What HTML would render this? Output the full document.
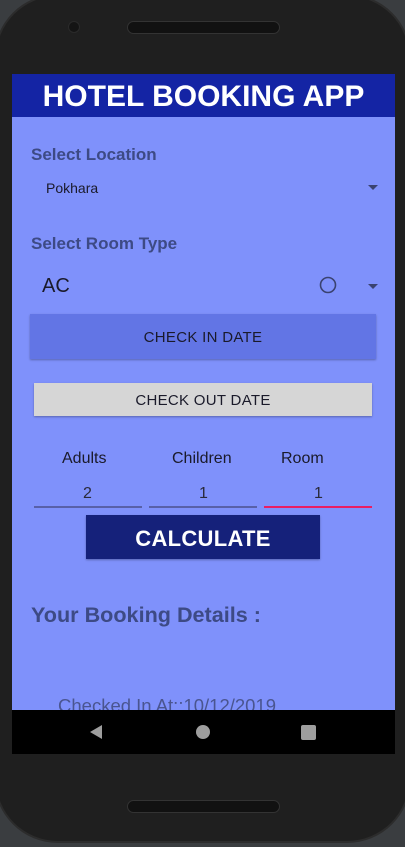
<!DOCTYPE html>
<html><head><meta charset="utf-8"><style>
*{margin:0;padding:0;box-sizing:border-box}
html,body{width:405px;height:847px;overflow:hidden;background:#3a3d40;font-family:"Liberation Sans",Roboto,sans-serif}
.phone{position:absolute;left:-4px;top:-4px;width:413px;height:845px;background:#1f1f1f;border-radius:62px;box-shadow:0 0 0 2px #2c2c2c}
.abs{position:absolute}
.screen{position:absolute;left:12px;top:74px;width:383px;height:680px;background:#7f91fb;overflow:hidden}
.hdr{position:absolute;left:0;top:0;width:383px;height:43px;background:#1424a4;color:#fff;font-weight:bold;font-size:30px;text-align:center;line-height:46px}
.lbl{position:absolute;color:#3d4a85;font-weight:bold}
.t{position:absolute;white-space:nowrap}
.btn{position:absolute;text-align:center;color:#1a1a2a;font-size:15px;letter-spacing:.3px;box-shadow:0 1px 2px rgba(0,0,0,.3)}
.ul{position:absolute;height:2px;top:432px;background:#5860a8}
.nav{position:absolute;left:0;top:636px;width:383px;height:44px;background:#000}
</style></head><body>
<div class="phone"></div>
<div class="abs" style="left:127px;top:21px;width:153px;height:13px;border-radius:7px;background:#111;border:1px solid #333"></div>
<div class="abs" style="left:68px;top:21px;width:12px;height:12px;border-radius:6px;background:#141414;border:1px solid #2a2a2a"></div>
<div class="abs" style="left:127px;top:800px;width:153px;height:13px;border-radius:7px;background:#111;border:1px solid #333"></div>
<div class="screen">
 <div class="hdr">HOTEL BOOKING APP</div>
 <div class="lbl" style="left:19px;top:71px;font-size:17px">Select Location</div>
 <div class="t" style="left:34px;top:106px;font-size:14px;color:#1a1a2a">Pokhara</div>
 <svg class="abs" style="left:356px;top:111px" width="10" height="5"><path d="M0 0H10L5 5Z" fill="#3a4270"/></svg>
 <div class="lbl" style="left:19px;top:160px;font-size:17px">Select Room Type</div>
 <div class="t" style="left:30px;top:201px;font-size:20px;color:#1a1a2a">AC</div>
 <svg class="abs" style="left:307px;top:202px" width="18" height="18"><circle cx="9" cy="9" r="7.5" fill="none" stroke="#3a4270" stroke-width="1.6"/></svg>
 <svg class="abs" style="left:356px;top:210px" width="10" height="5"><path d="M0 0H10L5 5Z" fill="#3a4270"/></svg>
 <div class="btn" style="left:18px;top:240px;width:346px;height:45px;background:#6275e5;line-height:48px">CHECK IN DATE</div>
 <div class="btn" style="left:22px;top:309px;width:338px;height:33px;background:#d6d6d6;line-height:36px">CHECK OUT DATE</div>
 <div class="t" style="left:50px;top:376px;font-size:16px;color:#1a1a2a">Adults</div>
 <div class="t" style="left:160px;top:376px;font-size:16px;color:#1a1a2a">Children</div>
 <div class="t" style="left:269px;top:376px;font-size:16px;color:#1a1a2a">Room</div>
 <div class="t" style="left:71px;top:411px;font-size:16px;color:#2a2a3a">2</div>
 <div class="t" style="left:187px;top:411px;font-size:16px;color:#2a2a3a">1</div>
 <div class="t" style="left:302px;top:411px;font-size:16px;color:#2a2a3a">1</div>
 <div class="ul" style="left:22px;width:108px"></div>
 <div class="ul" style="left:137px;width:108px"></div>
 <div class="ul" style="left:252px;width:108px;background:#e91e63"></div>
 <div class="btn" style="left:74px;top:441px;width:234px;height:44px;background:#15217a;color:#fff;font-weight:bold;font-size:22px;line-height:47px">CALCULATE</div>
 <div class="lbl" style="left:19px;top:528px;font-size:21.6px">Your Booking Details :</div>
 <div class="t" style="left:46px;top:621px;font-size:18.5px;color:#4a5590">Checked In At::10/12/2019</div>
 <div class="nav">
  <svg class="abs" style="left:78px;top:15px" width="12" height="14"><path d="M12 0V14L0 7Z" fill="#9e9e9e"/></svg>
  <div class="abs" style="left:184px;top:15px;width:14px;height:14px;border-radius:7px;background:#9e9e9e"></div>
  <div class="abs" style="left:289px;top:15px;width:15px;height:15px;border-radius:2px;background:#9e9e9e"></div>
 </div>
</div>
</body></html>
